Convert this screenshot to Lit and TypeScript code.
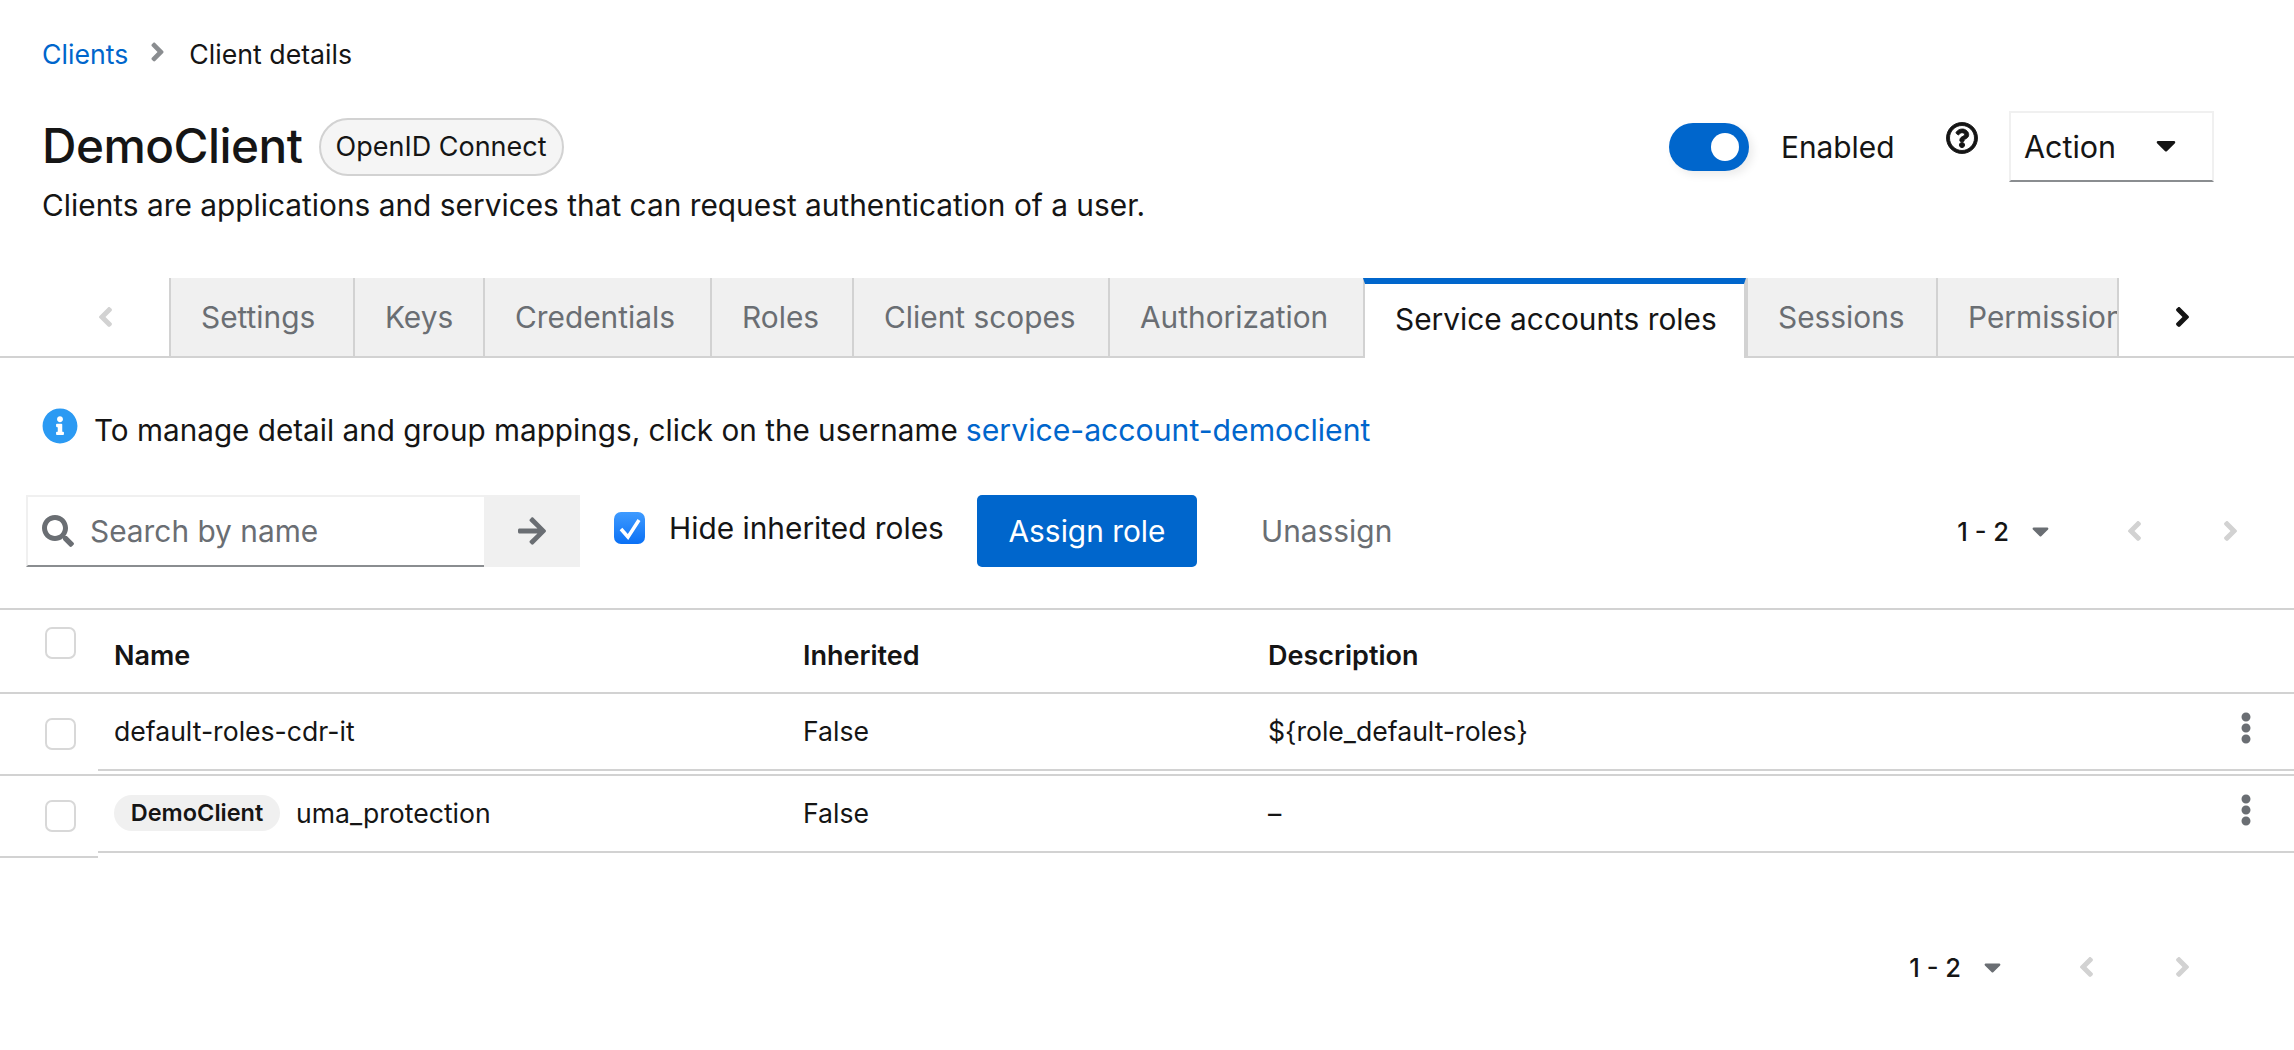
import { LitElement, html, css, svg } from "lit";
import { customElement } from "lit/decorators.js";

const ANGLE_RIGHT = "M224.3 273l-136 136c-9.4 9.4-24.6 9.4-33.9 0l-22.6-22.6c-9.4-9.4-9.4-24.6 0-33.9l96.4-96.4-96.4-96.4c-9.4-9.4-9.4-24.6 0-33.9L54.3 103c9.4-9.4 24.6-9.4 33.9 0l136 136c9.5 9.4 9.5 24.6.1 34z";
const ANGLE_LEFT = "M31.7 239l136-136c9.4-9.4 24.6-9.4 33.9 0l22.6 22.6c9.4 9.4 9.4 24.6 0 33.9L127.9 256l96.4 96.4c9.4 9.4 9.4 24.6 0 33.9L201.7 409c-9.4 9.4-24.6 9.4-33.9 0l-136-136c-9.5-9.4-9.5-24.6-.1-34z";
const CARET = "M31.3 192h257.3c17.8 0 26.7 21.5 14.1 34.1L174.1 354.8c-7.8 7.8-20.5 7.8-28.3 0L17.2 226.1C4.6 213.5 13.5 192 31.3 192z";
const SEARCH = "M505 442.7L405.3 343c-4.5-4.5-10.6-7-17-7H372c27.6-35.3 44-79.7 44-128C416 93.1 322.9 0 208 0S0 93.1 0 208s93.1 208 208 208c48.3 0 92.7-16.4 128-44v16.3c0 6.4 2.5 12.5 7 17l99.7 99.7c9.4 9.4 24.6 9.4 33.9 0l28.3-28.3c9.4-9.4 9.4-24.6.1-34zM208 336c-70.7 0-128-57.2-128-128 0-70.7 57.2-128 128-128 70.7 0 128 57.2 128 128 0 70.7-57.2 128-128 128z";
const ARROW = "M190.5 66.9l22.2-22.2c9.4-9.4 24.6-9.4 33.9 0L441 239c9.4 9.4 9.4 24.6 0 33.9L246.6 467.3c-9.4 9.4-24.6 9.4-33.9 0l-22.2-22.2c-9.5-9.5-9.3-25 .4-34.3L311.4 296H24c-13.3 0-24-10.7-24-24v-32c0-13.3 10.7-24 24-24h287.4L190.9 101.2c-9.8-9.3-10-24.8-.4-34.3z";
const INFO = "M256 8C119.043 8 8 119.083 8 256c0 136.997 111.043 248 248 248s248-111.003 248-248C504 119.083 392.957 8 256 8zm0 110c23.196 0 42 18.804 42 42s-18.804 42-42 42-42-18.804-42-42 18.804-42 42-42zm56 254c0 6.627-5.373 12-12 12h-88c-6.627 0-12-5.373-12-12v-24c0-6.627 5.373-12 12-12h12v-64h-12c-6.627 0-12-5.373-12-12v-24c0-6.627 5.373-12 12-12h64c6.627 0 12 5.373 12 12v100h12c6.627 0 12 5.373 12 12v24z";
const KEBAB = "M96 184c39.8 0 72 32.2 72 72s-32.2 72-72 72-72-32.2-72-72 32.2-72 72-72zM24 80c0 39.8 32.2 72 72 72s72-32.2 72-72S135.8 8 96 8 24 40.2 24 80zm0 352c0 39.8 32.2 72 72 72s72-32.2 72-72-32.2-72-72-72-72 32.2-72 72z";
const HELP = "M256 8C119.043 8 8 119.083 8 256c0 136.997 111.043 248 248 248s248-111.003 248-248C504 119.083 392.957 8 256 8zm0 448c-110.532 0-200-89.431-200-200 0-110.495 89.472-200 200-200 110.491 0 200 89.471 200 200 0 110.53-89.431 200-200 200zm107.244-255.2c0 67.052-72.421 68.084-72.421 92.863V300c0 6.627-5.373 12-12 12h-45.647c-6.627 0-12-5.373-12-12v-8.659c0-35.745 27.1-50.034 47.579-61.516 17.561-9.845 28.324-16.541 28.324-29.579 0-17.246-21.999-28.693-39.784-28.693-23.189 0-33.894 10.977-48.942 29.969-4.057 5.12-11.46 6.071-16.666 2.124l-27.824-21.098c-5.107-3.872-6.251-11.066-2.644-16.363C184.846 131.491 214.94 112 261.794 112c49.071 0 101.45 38.304 101.45 88.8zM298 368c0 23.159-18.841 42-42 42s-42-18.841-42-42 18.841-42 42-42 42 18.841 42 42z";

const icon = (d: string, w: number, cls: string) =>
  html`<svg class=${cls} viewBox="0 0 ${w} 512" fill="currentColor" aria-hidden="true">${svg`<path d=${d}></path>`}</svg>`;

const TABS = ["Settings", "Keys", "Credentials", "Roles", "Client scopes", "Authorization", "Service accounts roles", "Sessions", "Permissions"];

@customElement("app-root")
export class AppRoot extends LitElement {
  static styles = css`
    :host {
      display: block;
      font-family: "Inter", "Liberation Sans", sans-serif;
      font-size: 29.85px;
      color: #151515;
      background: #fff;
    }
    a { color: #06c; text-decoration: none; }
    svg { display: block; flex: none; }

    .head { padding: 36px 80px 0 42px; }
    .crumbs { display: flex; align-items: center; height: 36px; font-size: 26.7px; }
    .crumb-sep { width: 15px; height: 30px; margin: -4px 24px 0 22px; color: #8a8d90; }

    .titlebar { display: flex; align-items: center; height: 71px; margin-top: 39px; }
    .title { margin: -2px 0 0; font-size: 47.7px; font-weight: 500; letter-spacing: -0.5px; }
    .badge {
      display: flex; align-items: center; justify-content: center;
      width: 245px; height: 58px; margin-left: 16px; box-sizing: border-box;
      border: 2px solid #d2d2d2; border-radius: 29px; background: #f5f5f5; font-size: 27px;
    }
    .actions { display: flex; align-items: center; margin-left: auto; height: 100%; }
    .toggle { position: relative; width: 80px; height: 48px; border-radius: 24px; background: #06c; box-shadow: 4px 4px 8px rgba(0, 0, 0, 0.08); }
    .knob { position: absolute; top: 10px; right: 10px; width: 28px; height: 28px; border-radius: 50%; background: #fff; }
    .toggle-label { width: 165px; margin-left: 32px; }
    .help { width: 32px; height: 32px; margin-top: -18px; color: #151515; stroke: #151515; stroke-width: 14; }
    .select {
      display: flex; align-items: center; width: 205px; height: 71px; margin-left: 31px; padding-left: 13px; box-sizing: border-box;
      border: 2px solid #f0f0f0; border-bottom-color: #8a8d90; font-size: 30.5px;
    }
    .select span { width: 132px; }
    .select-caret { width: 20px; height: 32px; margin-top: -4px; }

    .subtitle { margin: 3px 0 0; height: 40px; line-height: 40px; }

    .tabs {
      display: grid;
      grid-template-columns: 169px 184px 130px 227px 142px 256px 255px 383px 190px 181px 1fr;
      height: 80px; margin-top: 53px;
    }
    .tab-end { display: flex; align-items: center; border-bottom: 2px solid #d2d2d2; }
    .tab-end.start { justify-content: flex-end; padding-right: 55px; color: #d2d2d2; }
    .tab-end.finish { padding-left: 55px; color: #151515; border-left: 2px solid #d2d2d2; }
    .tab-chev { width: 17px; height: 32px; }
    .tab {
      display: flex; align-items: center; padding-left: 30px; overflow: hidden; white-space: nowrap; box-sizing: border-box;
      background: #f0f0f0; color: #6a6e73; border-left: 2px solid #d2d2d2; border-bottom: 2px solid #d2d2d2;
    }
    .tab.active {
      background: #fff; color: #151515;
      border-top: 6px solid #06c; border-bottom: 0; border-right: 2px solid #d2d2d2;
      padding-bottom: 4px;
    }

    .notice { display: flex; align-items: center; height: 56px; margin-top: 44px; padding-left: 42px; font-size: 29.7px; }
    .notice-icon { width: 36px; height: 36px; margin: -8px 16px 0 0; color: #2b9af3; }
    .notice a { margin-left: 8px; font-size: 30.2px; }

    .toolbar { display: flex; align-items: center; height: 72px; margin-top: 37px; padding: 0 57px 0 26px; }
    .search {
      display: flex; align-items: center; width: 458px; height: 72px; box-sizing: border-box; padding-left: 14px;
      border: 2px solid #f0f0f0; border-right: 0; border-bottom-color: #8a8d90; color: #6a6e73;
    }
    .search-icon { width: 32px; height: 32px; margin-right: 16px; color: #6a6e73; }
    .go { display: flex; align-items: center; justify-content: center; width: 96px; height: 72px; background: #f0f0f0; color: #6a6e73; }
    .go-icon { width: 28px; height: 32px; }

    .hide { display: flex; align-items: center; width: 363px; margin-left: 34px; margin-top: -6px; box-sizing: border-box; }
    .checkbox { display: block; width: 31px; height: 32px; box-sizing: border-box; border: 2px solid #d8d8d8; border-radius: 7px; background: #fff; flex: none; }
    .checkbox.on { display: flex; align-items: center; justify-content: center; border: 0; background: linear-gradient(#3f9bff, #0a70f5); }
    .tick { width: 31px; height: 32px; fill: none; stroke: #fff; stroke-width: 3.5; }
    .hide-label { margin-left: 24px; white-space: nowrap; }

    .primary {
      display: flex; align-items: center; justify-content: center; width: 220px; height: 72px;
      border-radius: 5px; background: #06c; color: #fff;
    }
    .link-btn { margin-left: 64px; color: #6a6e73; }

    .pager { display: flex; align-items: center; margin-left: auto; font-size: 25.5px; font-weight: 500; }
    .pager-caret { width: 17px; height: 28px; margin-left: 23px; color: #6a6e73; }
    .pager-chev { width: 17px; height: 32px; color: #d2d2d2; }
    .pager-chev.prev { margin-left: 77px; }
    .pager-chev.next { margin-left: 79px; margin-right: -2px; }

    .table { margin-top: 41px; font-size: 26.6px; }
    .row { display: grid; grid-template-columns: 98px 1fr; }
    .row.header { height: 86px; box-sizing: border-box; border-top: 2px solid #d2d2d2; border-bottom: 2px solid #d2d2d2; }
    .row.second { border-top: 2px solid #d2d2d2; }
    .gutter { display: flex; align-items: center; justify-content: center; padding-left: 22px; }
    .row.header .gutter { align-items: flex-start; padding-top: 17px; }
    .row.second .gutter { border-bottom: 2px solid #d2d2d2; }
    .cells {
      display: grid; grid-template-columns: 689px 465px 1fr 62px; align-items: center;
      box-sizing: border-box; padding-left: 16px;
    }
    .row.body .cells { height: 77px; margin-bottom: 3px; border-bottom: 2px solid #d2d2d2; padding-bottom: 2px; }
    .row.second .cells { margin-bottom: 5px; }
    .row.header .cells { height: 82px; padding-top: 8px; font-size: 27px; font-weight: 600; }
    .name { display: flex; align-items: center; }
    .chip {
      display: flex; align-items: center; justify-content: center; width: 166px; height: 36px; margin-right: 16px;
      border-radius: 18px; background: #f0f0f0; font-size: 23.5px; font-weight: 600;
    }
    .kebab { width: 12px; height: 32px; color: #6a6e73; margin: 0 0 6px 8px; }

    .footer { display: flex; margin-top: 89px; height: 40px; padding-right: 105px; }
  `;

  private pager() {
    return html`<div class="pager">
      <span>1 - 2</span>
      ${icon(CARET, 320, "pager-caret")}
      ${icon(ANGLE_LEFT, 256, "pager-chev prev")}
      ${icon(ANGLE_RIGHT, 256, "pager-chev next")}
    </div>`;
  }

  render() {
    return html`
      <div class="head">
        <nav class="crumbs">
          <a href="#">Clients</a>
          ${icon(ANGLE_RIGHT, 256, "crumb-sep")}
          <span>Client details</span>
        </nav>
        <div class="titlebar">
          <h1 class="title">DemoClient</h1>
          <span class="badge">OpenID Connect</span>
          <div class="actions">
            <span class="toggle"><span class="knob"></span></span>
            <span class="toggle-label">Enabled</span>
            ${icon(HELP, 512, "help")}
            <div class="select"><span>Action</span>${icon(CARET, 320, "select-caret")}</div>
          </div>
        </div>
        <p class="subtitle">Clients are applications and services that can request authentication of a user.</p>
      </div>

      <div class="tabs">
        <div class="tab-end start">${icon(ANGLE_LEFT, 256, "tab-chev")}</div>
        ${TABS.map((t) => html`<div class="tab ${t === "Service accounts roles" ? "active" : ""}">${t}</div>`)}
        <div class="tab-end finish">${icon(ANGLE_RIGHT, 256, "tab-chev")}</div>
      </div>

      <div class="notice">
        ${icon(INFO, 512, "notice-icon")}
        <span>To manage detail and group mappings, click on the username</span>
        <a href="#">service-account-democlient</a>
      </div>

      <div class="toolbar">
        <div class="search">${icon(SEARCH, 512, "search-icon")}<span>Search by name</span></div>
        <div class="go">${icon(ARROW, 448, "go-icon")}</div>
        <label class="hide">
          <span class="checkbox on">
            <svg class="tick" viewBox="0 0 31 32"><path d="M7 17l7 8 11-17"></path></svg>
          </span>
          <span class="hide-label">Hide inherited roles</span>
        </label>
        <div class="primary">Assign role</div>
        <div class="link-btn">Unassign</div>
        ${this.pager()}
      </div>

      <div class="table">
        <div class="row header">
          <div class="gutter"><span class="checkbox"></span></div>
          <div class="cells"><span>Name</span><span>Inherited</span><span>Description</span></div>
        </div>
        <div class="row body">
          <div class="gutter"><span class="checkbox"></span></div>
          <div class="cells">
            <span>default-roles-cdr-it</span><span>False</span><span>\${role_default-roles}</span>
            ${icon(KEBAB, 192, "kebab")}
          </div>
        </div>
        <div class="row body second">
          <div class="gutter"><span class="checkbox"></span></div>
          <div class="cells">
            <span class="name"><span class="chip">DemoClient</span>uma_protection</span><span>False</span><span>–</span>
            ${icon(KEBAB, 192, "kebab")}
          </div>
        </div>
      </div>

      <div class="footer">${this.pager()}</div>
    `;
  }
}
